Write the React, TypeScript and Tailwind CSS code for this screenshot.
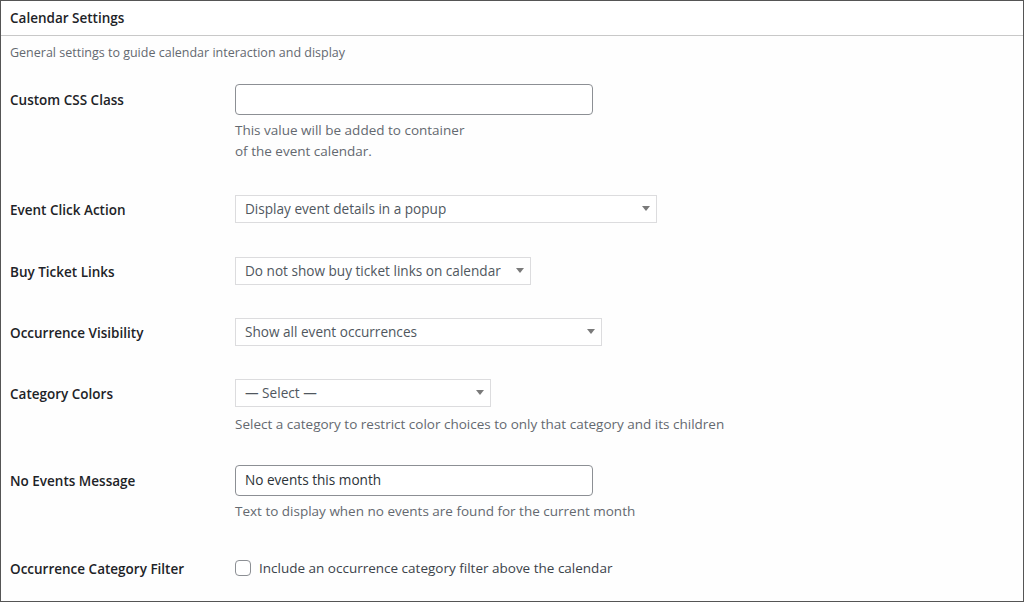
import React from 'react';

const font = { fontFamily: '"Open Sans", "Noto Sans", sans-serif' };

const Caret = () => (
  <svg width="8" height="5" viewBox="0 0 8 5" className="shrink-0 -mt-[2px]">
    <path d="M0 0h8L4 5z" fill="#7a7a7a" />
  </svg>
);

const Select: React.FC<{ value: string; width: string }> = ({ value, width }) => (
  <div className={`${width} h-[28px] flex items-center justify-between border border-[#dcdcde] bg-white pl-[9px] pr-[6px] text-[13.6px] text-[#50575e]`}>
    <span className="truncate">{value}</span>
    <Caret />
  </div>
);

const Help: React.FC<{ children: React.ReactNode; mt?: string }> = ({ children, mt = 'mt-[5px]' }) => (
  <p className={`${mt} text-[13.5px] leading-[21px] text-[#646970]`}>{children}</p>
);

const Row: React.FC<{ label: string; h: number; mt: string; children: React.ReactNode }> = ({ label, h, mt, children }) => (
  <div className={`flex items-start ${mt}`}>
    <div
      className="w-[225px] shrink-0 flex items-center pt-[2px] text-[13.5px] font-semibold text-[#1d2327]"
      style={{ height: h }}
    >
      {label}
    </div>
    <div className="flex flex-col">{children}</div>
  </div>
);

export default function App() {
  return (
    <div className="w-[1024px] h-[602px] bg-white" style={font}>
      <div className="h-full border border-[#555] flex flex-col">
        <div className="h-[35px] shrink-0 flex items-center pl-[9px] border-b border-[#c8c8c8] text-[13.5px] font-semibold text-[#1d2327]">
          Calendar Settings
        </div>
        <div className="pl-[9px] pr-[9px] bg-[#fefefe] flex-1">
          <p className="mt-[7px] text-[12.5px] leading-[20px] text-[#646970]">
            General settings to guide calendar interaction and display
          </p>

          <Row label="Custom CSS Class" h={31} mt="mt-[21px]">
            <div className="w-[358px] h-[31px] rounded-[4px] border border-[#8c8f94] bg-white" />
            <Help>
              This value will be added to container
              <br />
              of the event calendar.
            </Help>
          </Row>

          <Row label="Event Click Action" h={28} mt="mt-[33px]">
            <Select value="Display event details in a popup" width="w-[422px]" />
          </Row>

          <Row label="Buy Ticket Links" h={28} mt="mt-[34px]">
            <Select value="Do not show buy ticket links on calendar" width="w-[296px]" />
          </Row>

          <Row label="Occurrence Visibility" h={28} mt="mt-[33px]">
            <Select value="Show all event occurrences" width="w-[367px]" />
          </Row>

          <Row label="Category Colors" h={28} mt="mt-[33px]">
            <Select value="— Select —" width="w-[256px]" />
            <Help mt="mt-[7px]">Select a category to restrict color choices to only that category and its children</Help>
          </Row>

          <Row label="No Events Message" h={31} mt="mt-[30px]">
            <div className="w-[358px] h-[31px] rounded-[4px] border border-[#8c8f94] bg-white flex items-center px-[9px] text-[13.6px] text-[#2c3338]">
              No events this month
            </div>
            <Help>Text to display when no events are found for the current month</Help>
          </Row>

          <Row label="Occurrence Category Filter" h={20} mt="mt-[36px]">
            <label className="h-[20px] flex items-center gap-[8px] text-[13.5px] text-[#3c434a]">
              <span className="w-[16px] h-[16px] rounded-[4px] border border-[#8c8f94] bg-white" />
              Include an occurrence category filter above the calendar
            </label>
          </Row>
        </div>
      </div>
    </div>
  );
}
